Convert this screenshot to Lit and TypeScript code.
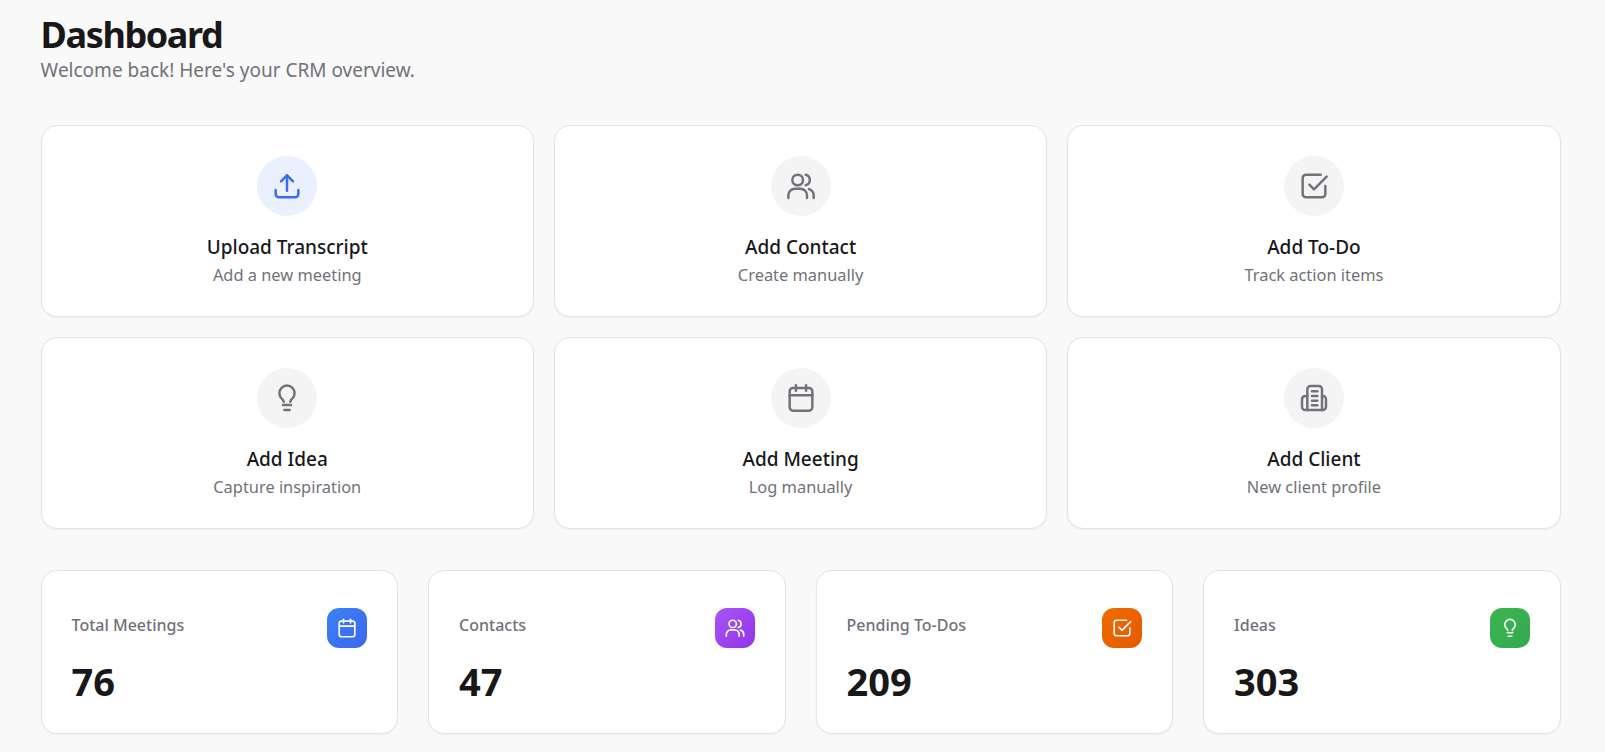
import { LitElement, html, css, svg } from 'lit';
import { customElement } from 'lit/decorators.js';

const icons = {
  upload: svg`<path d="M12 15.500V4"/><path d="M7.500 8.500 12 4l4.500 4.500"/><path d="M3.500 15v3a2.500 2.500 0 0 0 2.500 2.500h12a2.500 2.500 0 0 0 2.500-2.500v-3"/>`,
  users: svg`<circle cx="9.500" cy="7.500" r="4"/><path d="M2.500 21v-2a5 5 0 0 1 5-5h4a5 5 0 0 1 5 5v2"/><path d="M15.500 3.600a4 4 0 0 1 0 7.800"/><path d="M21.500 21v-2a5 5 0 0 0-3.500-4.700"/>`,
  todo: svg`<path d="M20.500 12v6a2.500 2.500 0 0 1-2.500 2.500H6A2.500 2.500 0 0 1 3.500 18V6A2.500 2.500 0 0 1 6 3.500h11"/><path d="m8.500 11 3.500 3.500L21.500 5"/>`,
  idea: svg`<path d="M9.500 14.800c0-1-.6-1.600-1.400-2.300a5.700 5.700 0 1 1 7.800 0c-.8.700-1.400 1.300-1.400 2.300"/><path d="M9 17.200h6"/><path d="M10 21h4"/>`,
  calendar: svg`<rect x="3.500" y="4.500" width="17" height="17" rx="2.500"/><path d="M3.500 10h17"/><path d="M8.200 2.500v4"/><path d="M15.800 2.500v4"/>`,
  client: svg`<path d="M7 21V5.500A2.500 2.500 0 0 1 9.500 3h6A2.500 2.500 0 0 1 18 5.500V21"/><path d="M7 10.500H5.500A2.500 2.500 0 0 0 3 13v5.500A2.500 2.500 0 0 0 5.500 21h13a2.500 2.500 0 0 0 2.500-2.500V13a2.500 2.500 0 0 0-2.500-2.500H18"/><path d="M10.500 7h4"/><path d="M10.500 10.500h4"/><path d="M10.500 14h4"/><path d="M10.500 17.500h4"/>`,
};

type IconName = keyof typeof icons;

const actions: { icon: IconName; title: string; sub: string; primary?: boolean }[] = [
  { icon: 'upload', title: 'Upload Transcript', sub: 'Add a new meeting', primary: true },
  { icon: 'users', title: 'Add Contact', sub: 'Create manually' },
  { icon: 'todo', title: 'Add To-Do', sub: 'Track action items' },
  { icon: 'idea', title: 'Add Idea', sub: 'Capture inspiration' },
  { icon: 'calendar', title: 'Add Meeting', sub: 'Log manually' },
  { icon: 'client', title: 'Add Client', sub: 'New client profile' },
];

const stats: { icon: IconName; label: string; value: number; tone: string }[] = [
  { icon: 'calendar', label: 'Total Meetings', value: 76, tone: 'blue' },
  { icon: 'users', label: 'Contacts', value: 47, tone: 'purple' },
  { icon: 'todo', label: 'Pending To-Dos', value: 209, tone: 'orange' },
  { icon: 'idea', label: 'Ideas', value: 303, tone: 'green' },
];

@customElement('app-root')
export class AppRoot extends LitElement {
  static styles = css`
    :host {
      display: block;
      height: 752px;
      overflow: hidden;
      background: #f9f9f9;
      font-family: 'Noto Sans', 'Liberation Sans', sans-serif;
      color: #18181b;
    }

    main {
      padding: 15px 44.4px 0 40.6px;
    }

    h1 {
      margin: 0;
      font-size: 36px;
      line-height: 40px;
      font-weight: 700;
      letter-spacing: -1.4px;
    }

    .intro {
      margin: 3px 0 0;
      font-size: 19px;
      line-height: 24px;
      color: #71717a;
    }

    .actions {
      display: grid;
      grid-template-columns: repeat(3, 1fr);
      gap: 20px;
      margin-top: 43px;
    }

    .card {
      background: #fff;
      border: 1px solid #e4e4e7;
      border-radius: 16px;
      box-shadow: 0 1px 2px rgba(0, 0, 0, 0.05);
    }

    .action {
      display: flex;
      flex-direction: column;
      align-items: center;
      height: 192px;
      box-sizing: border-box;
      padding-top: 30px;
    }

    .circle {
      display: flex;
      align-items: center;
      justify-content: center;
      width: 60px;
      height: 60px;
      border-radius: 50%;
      background: #f4f4f5;
      color: #71717a;
    }

    .circle.primary {
      background: #ebf0ff;
      color: #3b6cf0;
    }

    .action svg {
      width: 32px;
      height: 32px;
      stroke-width: 1.85;
    }

    svg {
      fill: none;
      stroke: currentColor;
      stroke-width: 2;
      stroke-linecap: round;
      stroke-linejoin: round;
    }

    .title {
      margin-top: 18px;
      font-size: 19px;
      line-height: 26px;
      font-weight: 500;
    }

    .sub {
      margin-top: 3px;
      font-size: 16.4px;
      line-height: 24px;
      color: #71717a;
    }

    .stats {
      display: grid;
      grid-template-columns: repeat(4, 1fr);
      gap: 30px;
      margin-top: 40.5px;
    }

    .stat {
      height: 164.5px;
      box-sizing: border-box;
      padding: 30px;
    }

    .stat-head {
      display: flex;
      justify-content: space-between;
      align-items: flex-start;
    }

    .label {
      margin-top: 12px;
      font-size: 16px;
      line-height: 24px;
      font-weight: 500;
      color: #71717a;
    }

    .badge {
      display: flex;
      align-items: center;
      justify-content: center;
      width: 40px;
      height: 40px;
      margin-top: 7px;
      border-radius: 12px;
      color: #fff;
    }

    .badge svg {
      width: 22px;
      height: 22px;
      stroke-width: 1.8;
    }

    .blue { background: linear-gradient(135deg, #3b82f6, #3b66ee); }
    .purple { background: linear-gradient(135deg, #a855f7, #9333ea); }
    .orange { background: linear-gradient(135deg, #ef6c00, #e65a00); }
    .green { background: linear-gradient(135deg, #3cb64e, #34a853); }

    .value {
      margin-top: 11px;
      font-size: 38px;
      line-height: 44px;
      font-weight: 700;
    }
  `;

  renderIcon(name: IconName) {
    return html`<svg viewBox="0 0 24 24">${icons[name]}</svg>`;
  }

  render() {
    return html`
      <main>
        <h1>Dashboard</h1>
        <p class="intro">Welcome back! Here's your CRM overview.</p>

        <section class="actions">
          ${actions.map(a => html`
            <div class="card action">
              <div class="circle ${a.primary ? 'primary' : ''}">${this.renderIcon(a.icon)}</div>
              <div class="title">${a.title}</div>
              <div class="sub">${a.sub}</div>
            </div>
          `)}
        </section>

        <section class="stats">
          ${stats.map(s => html`
            <div class="card stat">
              <div class="stat-head">
                <div class="label">${s.label}</div>
                <div class="badge ${s.tone}">${this.renderIcon(s.icon)}</div>
              </div>
              <div class="value">${s.value}</div>
            </div>
          `)}
        </section>
      </main>
    `;
  }
}
